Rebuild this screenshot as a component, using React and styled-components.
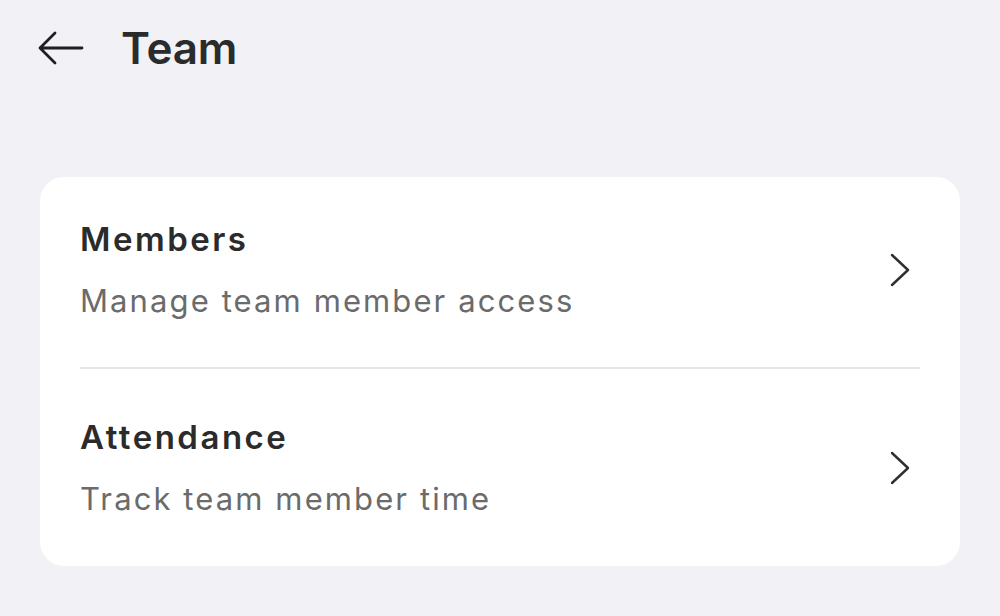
import React from "react";
import styled, { createGlobalStyle } from "styled-components";

const GlobalStyle = createGlobalStyle`
  html, body {
    margin: 0;
    padding: 0;
    background: #f1f1f6;
    font-family: Inter, "Noto Sans", sans-serif;
    color: #2b2b2b;
  }
`;

const Page = styled.div`
  width: 1000px;
  min-height: 616px;
  box-sizing: border-box;
  padding: 26px 40px 40px;
`;

const Header = styled.header`
  display: flex;
  align-items: center;
  column-gap: 37px;
  height: 44px;
  margin-left: -4px;
`;

const BackButton = styled.button`
  display: flex;
  align-items: center;
  justify-content: center;
  width: 48px;
  height: 44px;
  padding: 0;
  border: none;
  background: none;
  color: #1f1f1f;
  cursor: pointer;
`;

const Title = styled.h1`
  margin: 0;
  font-size: 44px;
  font-weight: 600;
  line-height: 44px;
  letter-spacing: -0.2px;
  color: #2b2b2b;
`;

const Card = styled.div`
  margin-top: 107px;
  background: #ffffff;
  border-radius: 24px;
  overflow: hidden;
`;

const Row = styled.a`
  display: flex;
  align-items: center;
  justify-content: space-between;
  padding: ${({ $first }) => ($first ? "42px 50px 46px 40px" : "48px 50px 47px 40px")};
  text-decoration: none;
  cursor: pointer;
`;

const Texts = styled.div`
  display: flex;
  flex-direction: column;
  row-gap: 22px;
`;

const RowTitle = styled.div`
  font-size: 33px;
  font-weight: 600;
  line-height: 40px;
  letter-spacing: 2.5px;
  color: #2b2b2b;
`;

const RowSub = styled.div`
  font-size: 31px;
  font-weight: 400;
  line-height: 40px;
  letter-spacing: 2.1px;
  color: #6b6b6b;
`;

const Divider = styled.hr`
  margin: 0 40px;
  border: none;
  border-top: 2px solid #e6e6e9;
`;

const Chevron = () => (
  <svg width="20" height="34" viewBox="0 0 20 34" fill="none">
    <path
      d="M2 2 L18 17 L2 32"
      stroke="#2f2f2f"
      strokeWidth="2.4"
      strokeLinecap="round"
      strokeLinejoin="round"
    />
  </svg>
);

const BackArrow = () => (
  <svg width="48" height="36" viewBox="0 0 48 36" fill="none">
    <path
      d="M46 18 H4 M19 3 L4 18 L19 33"
      stroke="#1f1f1f"
      strokeWidth="2.8"
      strokeLinecap="round"
      strokeLinejoin="round"
    />
  </svg>
);

const items = [
  { id: "members", title: "Members", sub: "Manage team member access" },
  { id: "attendance", title: "Attendance", sub: "Track team member time" },
];

export default function App() {
  return (
    <>
      <GlobalStyle />
      <Page>
        <Header>
          <BackButton aria-label="Back">
            <BackArrow />
          </BackButton>
          <Title>Team</Title>
        </Header>
        <Card>
          {items.map(({ id, title, sub }, i) => (
            <React.Fragment key={id}>
              {i > 0 && <Divider />}
              <Row $first={i === 0}>
                <Texts>
                  <RowTitle>{title}</RowTitle>
                  <RowSub>{sub}</RowSub>
                </Texts>
                <Chevron />
              </Row>
            </React.Fragment>
          ))}
        </Card>
      </Page>
    </>
  );
}
